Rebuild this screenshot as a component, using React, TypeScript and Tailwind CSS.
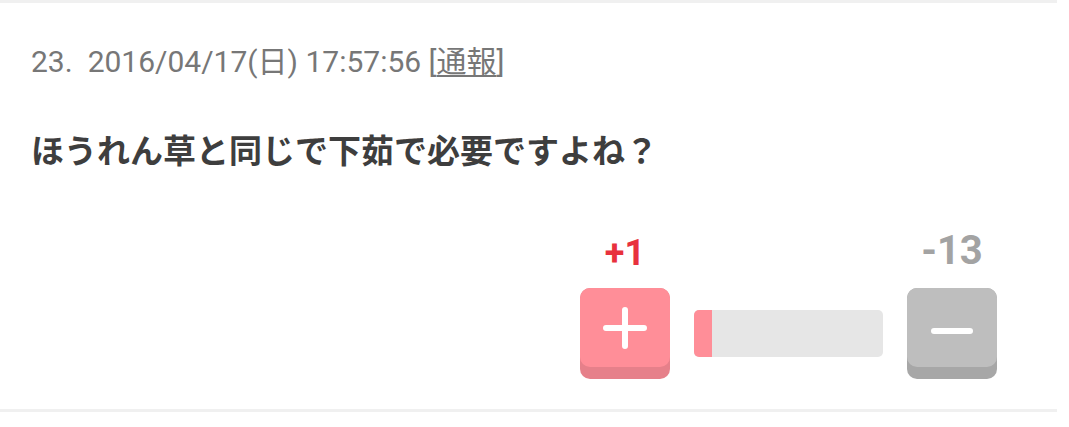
import React from "react";

export default function App() {
  return (
    <div className="w-[1069px] h-[427px] bg-white">
      <div className="w-[1057px] border-t-[3px] border-b-[3px] border-[#f0f0f0] pl-[31px] pr-[60px] pt-[44px] pb-[30px]">
        <div
          className="text-[30px] leading-none text-[#777777] whitespace-nowrap"
          style={{ fontFamily: 'Roboto, "Noto Sans CJK JP", sans-serif' }}
        >
          <span>23.</span>
          <span className="ml-[15px]">2016/04/17(日) 17:57:56 </span>
          <span>[</span>
          <span className="underline underline-offset-[3px] decoration-[2px]">通報</span>
          <span>]</span>
        </div>
        <div
          className="mt-[56px] text-[33px] leading-none font-bold text-[#3e3e3e] whitespace-nowrap"
          style={{ fontFamily: '"Noto Sans CJK JP", sans-serif' }}
        >
          ほうれん草と同じで下茹で必要ですよね？
        </div>
        <div className="mt-[64px] flex justify-end items-end gap-[24px]">
          <div className="flex flex-col items-center w-[90px]">
            <div className="h-[40px] flex items-end justify-center">
              <span
                className="text-[36px] leading-none font-bold text-[#e8313d] mb-[-1px]"
                style={{ fontFamily: "Roboto, sans-serif" }}
              >
                +1
              </span>
            </div>
            <div className="mt-[18px] w-[90px] h-[91px] rounded-[10px] bg-[#e6808a]">
              <div className="h-[79px] rounded-[10px] bg-[#ff8e98] flex items-center justify-center">
                <svg width="44" height="42" viewBox="0 0 44 42">
                  <path d="M22 3 V39 M3 21 H41" stroke="#ffffff" strokeWidth="6" strokeLinecap="round" />
                </svg>
              </div>
            </div>
          </div>
          <div className="mb-[22px] w-[189px] h-[47px] rounded-[5px] bg-[#e6e6e6] overflow-hidden flex">
            <div className="w-[18px] h-full bg-[#ff8e98]" />
          </div>
          <div className="flex flex-col items-center w-[90px]">
            <div className="h-[40px] flex items-end justify-center">
              <span
                className="text-[40px] leading-none font-bold text-[#a3a3a3] mb-[-1px]"
                style={{ fontFamily: "Roboto, sans-serif" }}
              >
                -13
              </span>
            </div>
            <div className="mt-[18px] w-[90px] h-[91px] rounded-[10px] bg-[#a7a7a7]">
              <div className="h-[79px] rounded-[10px] bg-[#bebebe] flex items-center justify-center pt-[6px]">
                <svg width="44" height="8" viewBox="0 0 44 8">
                  <path d="M4 4 H40" stroke="#ffffff" strokeWidth="6" strokeLinecap="round" />
                </svg>
              </div>
            </div>
          </div>
        </div>
      </div>
    </div>
  );
}
